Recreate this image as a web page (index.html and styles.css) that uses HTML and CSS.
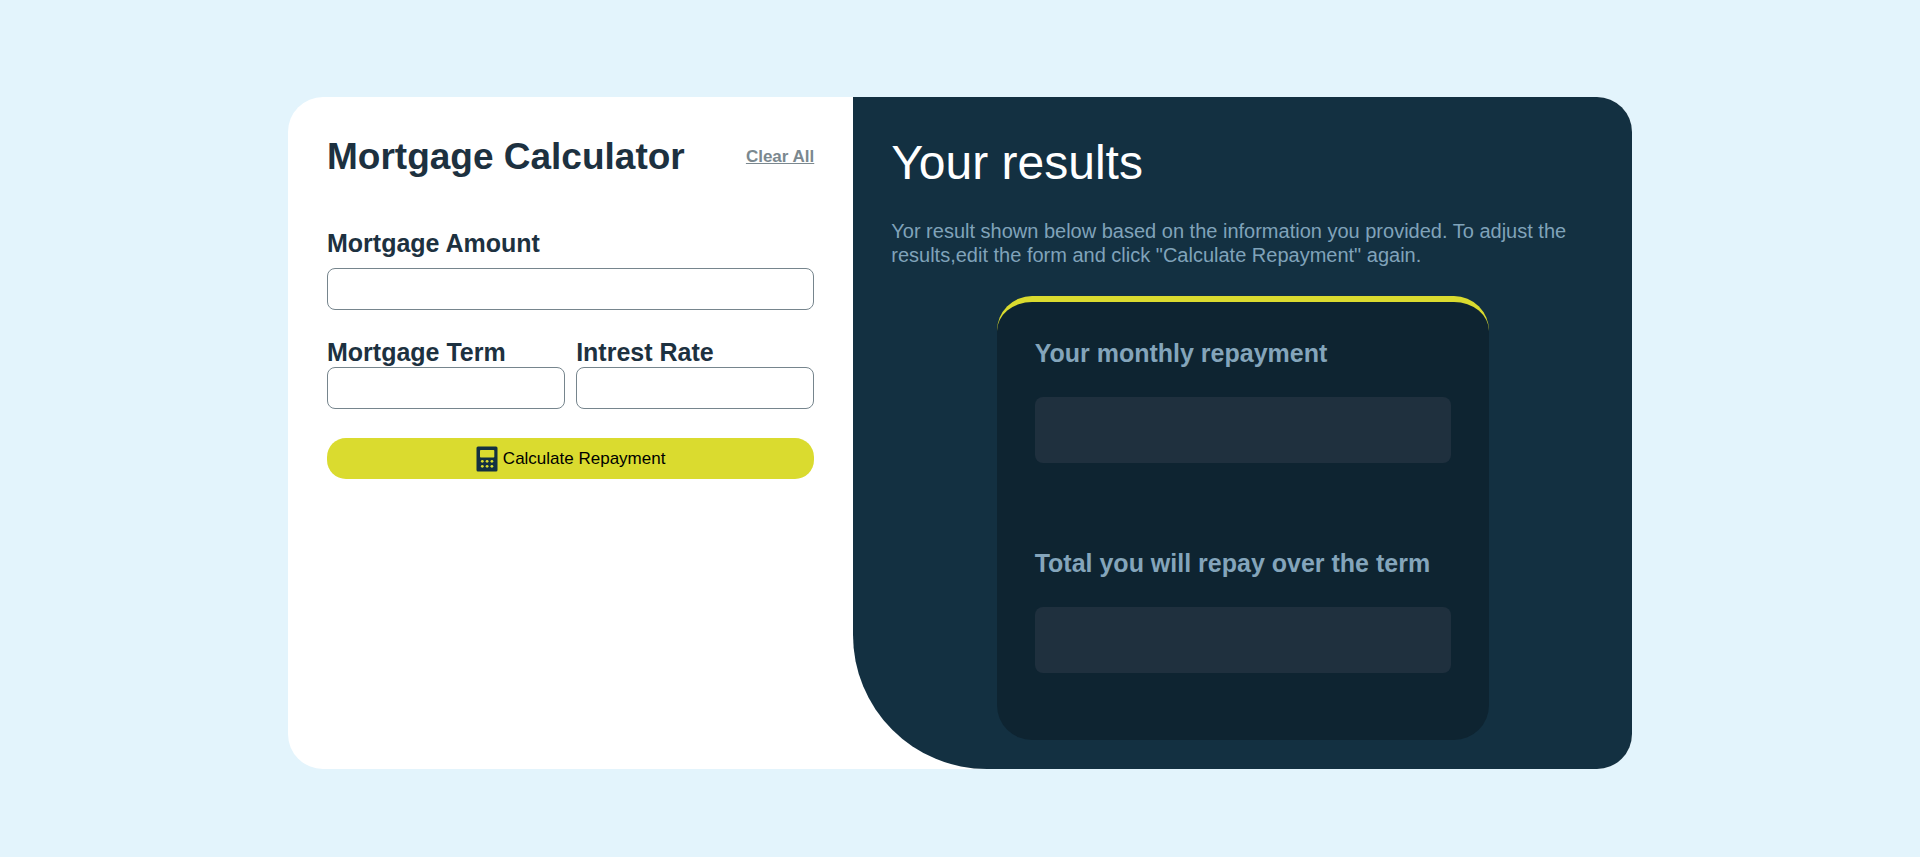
FILE: index.html
```html
<!DOCTYPE html>
<html lang="en">
<head>
  <meta charset="utf-8">
  <meta name="viewport" content="width=device-width, initial-scale=1">
  <title>Mortgage Calculator</title>
  <link rel="stylesheet" href="styles.css">
</head>
<body>
  <main class="calculator">
    <form class="entry">
      <header class="entry-header">
        <h1 class="entry-title">Mortgage Calculator</h1>
        <a class="clear" href="#">Clear All</a>
      </header>
      <div class="field field-amount">
        <label for="amount">Mortgage Amount</label>
        <input id="amount" type="text" inputmode="decimal">
      </div>
      <div class="field-row">
        <div class="field">
          <label for="term">Mortgage Term</label>
          <input id="term" type="text" inputmode="numeric">
        </div>
        <div class="field">
          <label for="rate">Intrest Rate</label>
          <input id="rate" type="text" inputmode="decimal">
        </div>
      </div>
      <button class="submit" type="button">
        <svg class="submit-icon" viewBox="0 0 22 26" aria-hidden="true">
          <path fill="#133041" fill-rule="evenodd" d="M2 .5h18a1.5 1.5 0 0 1 1.500 1.500v22a1.500 1.500 0 0 1-1.500 1.500H2A1.500 1.500 0 0 1 .5 24V2A1.500 1.500 0 0 1 2 .5zM4.800 4a.8.8 0 0 0-.8.8v5.900a.8.8 0 0 0 .8.800h12.700a.8.8 0 0 0 .8-.8V4.800a.8.8 0 0 0-.8-.8z"/>
          <g fill="#dadb2f">
            <circle cx="6.300" cy="15.300" r="1.400"/><circle cx="11.100" cy="15.300" r="1.400"/><circle cx="15.900" cy="15.300" r="1.400"/>
            <circle cx="6.300" cy="20.300" r="1.400"/><circle cx="11.100" cy="20.300" r="1.400"/><circle cx="15.900" cy="20.300" r="1.400"/>
          </g>
        </svg>
        Calculate Repayment
      </button>
    </form>
    <section class="results">
      <h2 class="results-title">Your results</h2>
      <p class="results-text">Yor result shown below based on the information you provided. To adjust the results,edit the form and click "Calculate Repayment" again.</p>
      <div class="summary">
        <div class="total">
          <label for="monthly">Your monthly repayment</label>
          <input id="monthly" type="text" readonly>
        </div>
        <div class="total">
          <label for="overall">Total you will repay over the term</label>
          <input id="overall" type="text" readonly>
        </div>
      </div>
    </section>
  </main>
</body>
</html>
```
FILE: styles.css
```css
* {
  box-sizing: border-box;
  margin: 0;
}

body {
  min-height: 100vh;
  padding: 16px 0 8px;
  display: flex;
  align-items: center;
  justify-content: center;
  background: #e3f4fc;
  color: #1d3140;
  font-family: "Liberation Sans", Arial, sans-serif;
}

.calculator {
  width: 70%;
  display: grid;
  grid-template-columns: 421fr 580fr;
  background: #fff;
  border-radius: 35px;
  overflow: hidden;
}

.entry {
  padding: 38px 39px;
}

.entry-header {
  display: flex;
  align-items: center;
  justify-content: space-between;
  margin-bottom: 52px;
}

.entry-title {
  font-size: 37px;
  line-height: 43px;
}

.clear {
  padding-top: 2px;
  color: #7b888f;
  font-size: 17px;
  font-weight: bold;
}

.field,
.total {
  display: flex;
  flex-direction: column;
  min-width: 0;
}

.field {
  gap: 2px;
}

.field label,
.total label {
  font-size: 25px;
  line-height: 26px;
  font-weight: bold;
}

.field input {
  width: 100%;
  height: 42px;
  padding: 0 12px;
  border: 1px solid #76858d;
  border-radius: 8px;
  background: #fff;
  font: inherit;
}

.field-amount {
  gap: 12px;
}

.field-row {
  display: grid;
  grid-template-columns: 1fr 1fr;
  gap: 11px;
  margin: 29px 0;
}

.submit {
  width: 100%;
  height: 41px;
  padding: 2px 0 0;
  display: flex;
  align-items: center;
  justify-content: center;
  gap: 5px;
  border: 0;
  border-radius: 19px;
  background: #dadb2f;
  color: #000;
  font-family: inherit;
  font-size: 17px;
}

.submit-icon {
  width: 22px;
  height: 26px;
}

.results {
  padding: 38px 38px 29px;
  background: #133041;
  border-bottom-left-radius: 134px;
}

.results-title {
  margin-bottom: 29px;
  color: #fff;
  font-size: 48px;
  line-height: 55px;
  font-weight: normal;
}

.results-text {
  margin-bottom: 29px;
  color: #80a3ba;
  font-size: 20px;
  line-height: 24px;
}

.summary {
  width: 70%;
  margin: 0 auto;
  padding: 38px 38px 67px;
  display: grid;
  gap: 87px;
  border-top: 6px solid #dadb2f;
  border-radius: 35px;
  background: #0e2431;
}

.total {
  gap: 31px;
  color: #84a5bb;
}

.total input {
  width: 100%;
  height: 66px;
  padding: 0 16px;
  border: 0;
  border-radius: 8px;
  background: #1f303e;
  color: #dadb2f;
  font: inherit;
}
```
